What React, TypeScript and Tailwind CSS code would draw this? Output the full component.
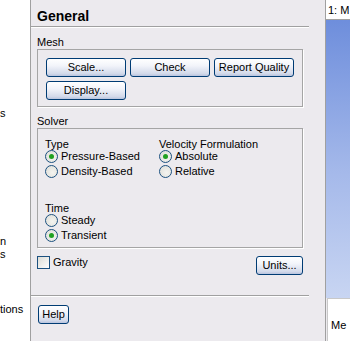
import React from 'react';

function XpButton({ label, className = '' }: { label: string; className?: string }) {
  return (
    <button
      className={`h-[19px] rounded-[3px] border border-[#003C74] bg-[linear-gradient(#FFFFFF,#F2F4FA_40%,#D3DAEA_85%,#B9C4DE)] text-[11px] leading-none text-black flex items-center justify-center ${className}`}
    >
      {label}
    </button>
  );
}

function Radio({ label, checked = false }: { label: string; checked?: boolean }) {
  return (
    <div className="flex items-center h-[15px] gap-[3px]">
      <span className="w-[13px] h-[13px] rounded-full border border-[#1C5180] bg-[radial-gradient(circle_at_60%_60%,#F4F4F0,#DCDCD6)] flex items-center justify-center">
        {checked && <span className="w-[5px] h-[5px] rounded-full bg-[#21A121]" />}
      </span>
      <span>{label}</span>
    </div>
  );
}

function Separator() {
  return <div className="h-[2px] mr-[16px] border-t border-[#A0A0A0] border-b-white" style={{ borderBottomWidth: 1 }} />;
}

export default function App() {
  return (
    <div className="flex w-[350px] h-[341px] overflow-hidden bg-[#ECEAEE] text-[11px] text-black font-['Liberation_Sans',Arial,sans-serif]">
      {/* tree strip on the left, only the ends of its labels show */}
      <div className="w-[31px] shrink-0 bg-white border-r border-[#A0A0A0] overflow-hidden whitespace-nowrap leading-[13px]">
        <div className="mt-[107px]">s</div>
        <div className="mt-[115px]">n</div>
        <div>s</div>
        <div className="mt-[42px]">tions</div>
      </div>

      {/* main task page */}
      <div className="w-[294px] shrink-0 flex flex-col">
        <div className="h-[26px] pl-[6px] pt-[8px] text-[14px] font-bold leading-[16px]">General</div>
        <Separator />

        <div className="pl-[6px] mt-[8px] leading-[13px]">Mesh</div>
        <div className="ml-[6px] w-[266px] border border-[#A5A5A5] shadow-[1px_1px_0_#fff] pt-[8px] pb-[6px] pl-[8px] flex flex-col gap-[4px]">
          <div className="flex gap-[4px]">
            <XpButton label="Scale..." className="w-[80px]" />
            <XpButton label="Check" className="w-[80px]" />
            <XpButton label="Report Quality" className="w-[80px]" />
          </div>
          <XpButton label="Display..." className="w-[80px]" />
        </div>

        <div className="pl-[6px] mt-[8px] leading-[13px]">Solver</div>
        <div className="ml-[6px] w-[266px] h-[120px] border border-[#A5A5A5] shadow-[1px_1px_0_#fff] pl-[7px] pt-[10px] flex flex-col">
          <div className="flex">
            <div className="w-[114px] flex flex-col">
              <div className="leading-[10px] h-[10px]">Type</div>
              <Radio label="Pressure-Based" checked />
              <Radio label="Density-Based" />
            </div>
            <div className="flex flex-col">
              <div className="leading-[10px] h-[10px]">Velocity Formulation</div>
              <Radio label="Absolute" checked />
              <Radio label="Relative" />
            </div>
          </div>
          <div className="mt-[24px] leading-[10px] h-[10px]">Time</div>
          <Radio label="Steady" />
          <Radio label="Transient" checked />
        </div>

        <div className="ml-[6px] mt-[7px] w-[266px] flex items-start justify-between">
          <div className="flex items-center gap-[3px] h-[14px]">
            <span className="w-[13px] h-[13px] border border-[#1C5180] bg-[linear-gradient(135deg,#DCDCD6,#FFFFFF)]" />
            <span>Gravity</span>
          </div>
          <XpButton label="Units..." className="w-[47px] mt-[1px]" />
        </div>

        <div className="mt-[20px]">
          <Separator />
        </div>

        <div className="pl-[7px] mt-[8px]">
          <XpButton label="Help" className="w-[31px] h-[18px]" />
        </div>
      </div>

      {/* graphics window */}
      <div className="flex-1 border-l border-[#A0A0A0] flex flex-col overflow-hidden whitespace-nowrap">
        <div className="h-[20px] bg-white border-b border-[#A0A0A0] pl-[2px] pt-[4px] leading-[13px]">1: M</div>
        <div className="flex-1 bg-[linear-gradient(#6E8EDC,#A5B9EA_55%,#C8D5F2)]" />
        <div className="h-[43px] ml-[1px] bg-white border-t border-l border-[#C8C8C8] pl-[3px] pt-[20px] leading-[13px]">Me</div>
      </div>
    </div>
  );
}
